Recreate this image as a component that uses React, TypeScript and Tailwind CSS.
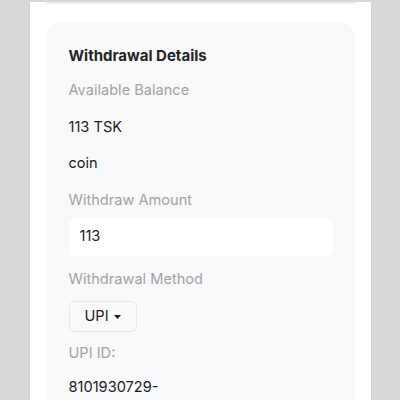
import React from 'react'

const Label = ({ children, className = '' }: { children: React.ReactNode; className?: string }) => (
    <div className={`text-[14.6px] leading-6 text-[#a3a3a3] ${className}`}>{children}</div>
)

const Value = ({ children, className = '' }: { children: React.ReactNode; className?: string }) => (
    <div className={`text-[14.6px] leading-6 text-[#1c1c1c] ${className}`}>{children}</div>
)

const App = () => {
    return (
        <div className="h-[400px] w-[400px] overflow-hidden bg-[#d8d8d8] font-['Inter',sans-serif]">
            <div className="mx-auto h-full w-[343px] border-x border-[#cfcfcf] bg-white px-[16px]">
                <div className="h-[2px] mt-[2px] bg-[#efefef]" />
                <div className="mt-[18px] rounded-2xl bg-[#f8f9fa] px-[23px] pt-[22px] pb-6">
                    <div className="mb-[10px] text-[15px] font-bold leading-6 text-[#252525]">
                        Withdrawal Details
                    </div>
                    <Label className="mb-[13px]">Available Balance</Label>
                    <Value className="mb-3">113 TSK</Value>
                    <Value className="mb-[13px]">coin</Value>
                    <Label className="mb-[6px]">Withdraw Amount</Label>
                    <div className="mb-[11px] flex h-[38px] w-[264px] items-center rounded-md bg-white px-[11px] text-[14.6px] text-[#1c1c1c]">
                        113
                    </div>
                    <Label className="mb-[10px]">Withdrawal Method</Label>
                    <button className="mb-[9px] flex h-[31px] items-center gap-[5px] rounded-md border border-[#e6e6e6] bg-[#f9f9f9] px-[15px] text-[14.6px] text-[#1c1c1c]">
                        UPI
                        <svg width="7" height="4" viewBox="0 0 7 4">
                            <path d="M0 0h7L3.5 4z" fill="#1c1c1c" />
                        </svg>
                    </button>
                    <Label className="mb-[10px]">UPI ID:</Label>
                    <Value>8101930729-</Value>
                </div>
            </div>
        </div>
    )
}

export default App
